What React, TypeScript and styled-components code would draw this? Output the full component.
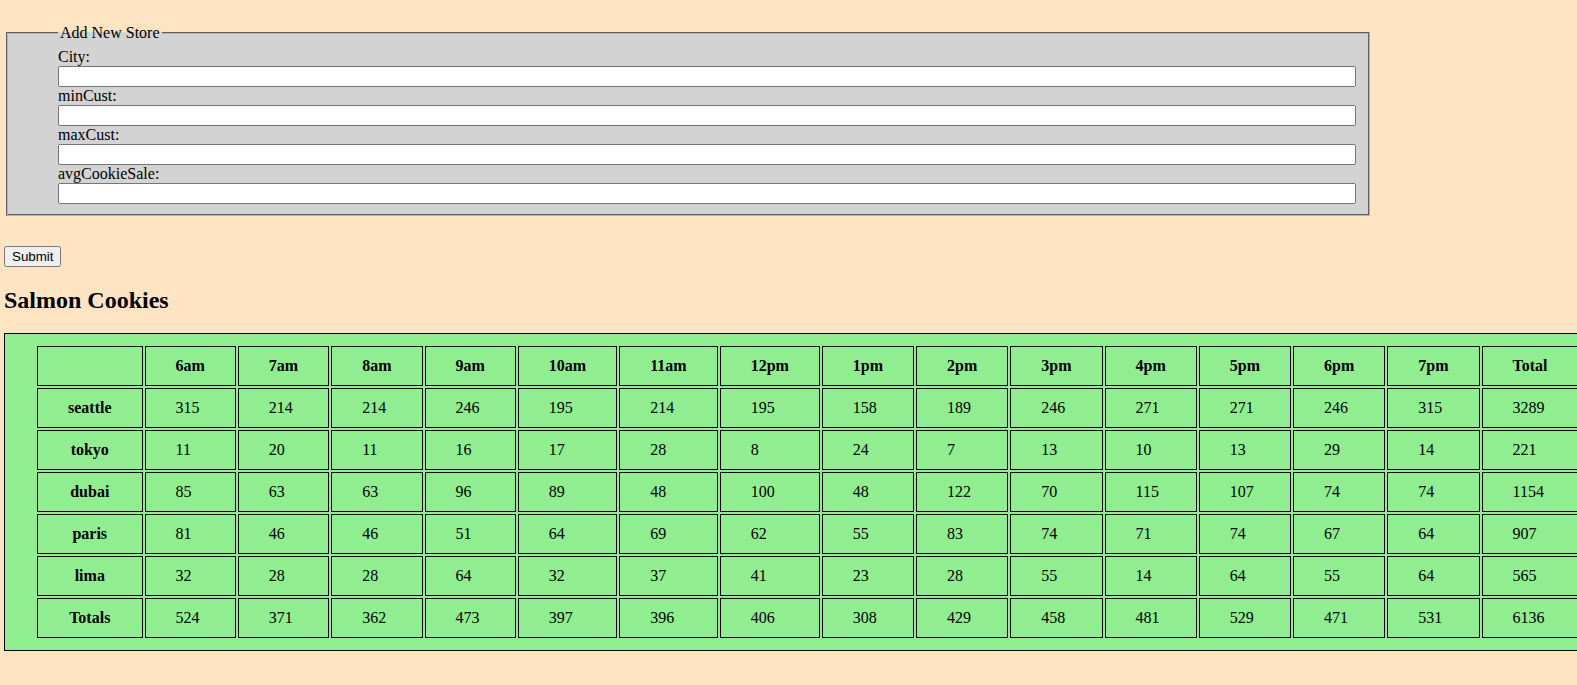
import React from "react";
import styled, { createGlobalStyle } from "styled-components";

const GlobalStyle = createGlobalStyle`
  html {
    overflow: hidden;
  }
  body {
    margin: 0;
    background: bisque;
    font-family: "Liberation Serif", "Times New Roman", serif;
    font-size: 16px;
    color: #000;
  }
`;

const Page = styled.main`
  padding: 4px;
`;

const StoreForm = styled.form`
  margin: 20px 0 0;
`;

const FieldSet = styled.fieldset`
  box-sizing: border-box;
  width: 1364px;
  margin: 0 2px;
  padding: 0.35em 12px 10px 50px;
  background: lightgray;
  border: 2px groove #b4b4b4;
`;

const Legend = styled.legend`
  padding: 0 2px;
`;

const Label = styled.label`
  display: block;
`;

const TextInput = styled.input`
  display: block;
  box-sizing: border-box;
  width: 100%;
  margin: 0;
  font-family: "Liberation Sans", Arial, sans-serif;
`;

const SubmitRow = styled.div`
  margin-top: 30px;
`;

const SubmitButton = styled.button`
  font-family: "Liberation Sans", Arial, sans-serif;
  font-size: 13.333px;
  margin: 0;
`;

const Heading = styled.h2`
  font-size: 24px;
  font-weight: bold;
  margin: 0.83em 0;
`;

const TableBox = styled.section`
  width: max-content;
  border: 1px solid #000;
  background: lightgreen;
  padding: 10px 30px;
`;

const SalesTable = styled.table`
  border-collapse: separate;
  border-spacing: 2px;
`;

const HeadCell = styled.th`
  border: 1px solid #000;
  padding: 10px 30px;
  font-weight: bold;
  text-align: center;
`;

const Cell = styled.td`
  border: 1px solid #000;
  padding: 10px 30px;
  text-align: left;
`;

const hours = [
  "6am", "7am", "8am", "9am", "10am", "11am", "12pm",
  "1pm", "2pm", "3pm", "4pm", "5pm", "6pm", "7pm",
];

const stores: { name: string; values: number[] }[] = [
  { name: "seattle", values: [315, 214, 214, 246, 195, 214, 195, 158, 189, 246, 271, 271, 246, 315, 3289] },
  { name: "tokyo", values: [11, 20, 11, 16, 17, 28, 8, 24, 7, 13, 10, 13, 29, 14, 221] },
  { name: "dubai", values: [85, 63, 63, 96, 89, 48, 100, 48, 122, 70, 115, 107, 74, 74, 1154] },
  { name: "paris", values: [81, 46, 46, 51, 64, 69, 62, 55, 83, 74, 71, 74, 67, 64, 907] },
  { name: "lima", values: [32, 28, 28, 64, 32, 37, 41, 23, 28, 55, 14, 64, 55, 64, 565] },
];

const totals = [524, 371, 362, 473, 397, 396, 406, 308, 429, 458, 481, 529, 471, 531, 6136];

const fields = ["City", "minCust", "maxCust", "avgCookieSale"];

export default function App() {
  return (
    <>
      <GlobalStyle />
      <Page>
        <StoreForm onSubmit={(e) => e.preventDefault()}>
          <FieldSet>
            <Legend>Add New Store</Legend>
            {fields.map((f) => (
              <React.Fragment key={f}>
                <Label htmlFor={f}>{f}:</Label>
                <TextInput id={f} name={f} type="text" />
              </React.Fragment>
            ))}
          </FieldSet>
          <SubmitRow>
            <SubmitButton type="submit">Submit</SubmitButton>
          </SubmitRow>
        </StoreForm>
        <Heading>Salmon Cookies</Heading>
        <TableBox>
          <SalesTable>
            <thead>
              <tr>
                <HeadCell></HeadCell>
                {hours.map((h) => (
                  <HeadCell key={h}>{h}</HeadCell>
                ))}
                <HeadCell>Total</HeadCell>
              </tr>
            </thead>
            <tbody>
              {stores.map((s) => (
                <tr key={s.name}>
                  <HeadCell>{s.name}</HeadCell>
                  {s.values.map((v, i) => (
                    <Cell key={i}>{v}</Cell>
                  ))}
                </tr>
              ))}
            </tbody>
            <tfoot>
              <tr>
                <HeadCell>Totals</HeadCell>
                {totals.map((v, i) => (
                  <Cell key={i}>{v}</Cell>
                ))}
              </tr>
            </tfoot>
          </SalesTable>
        </TableBox>
      </Page>
    </>
  );
}
